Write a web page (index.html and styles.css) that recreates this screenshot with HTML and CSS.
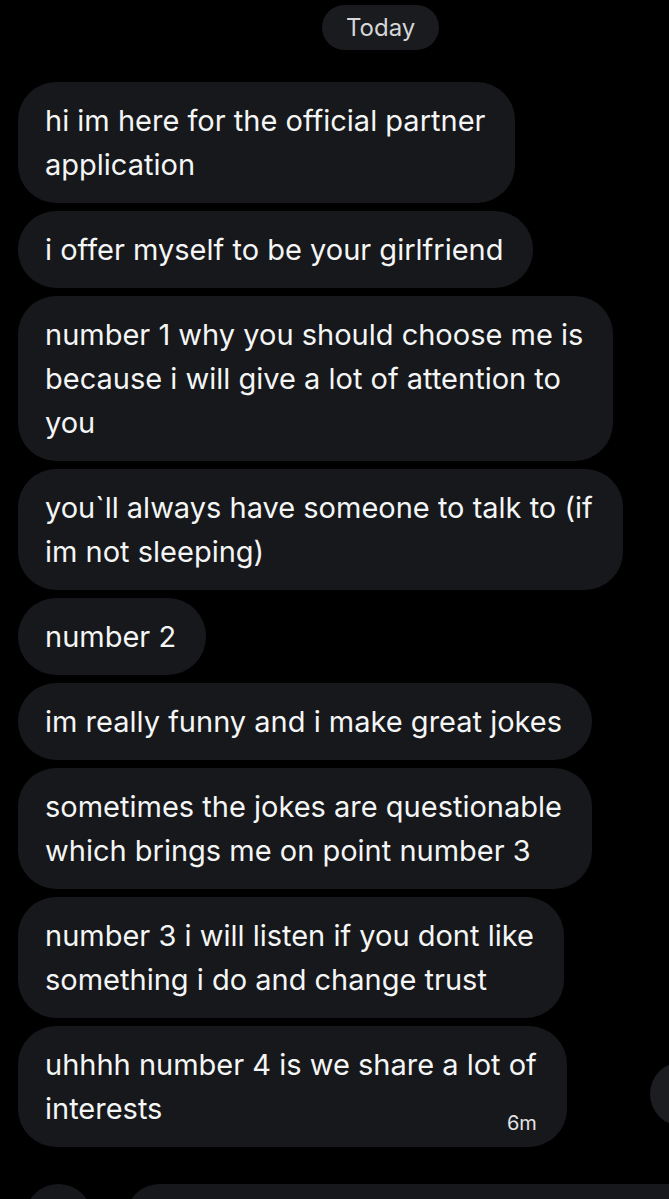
FILE: index.html
```html
<!DOCTYPE html>
<html lang="en">
<head>
  <meta charset="UTF-8">
  <title>Messages</title>
  <link rel="stylesheet" href="styles.css">
</head>
<body>

  <div class="chat">
    <div class="day"><span>Today</span></div>

    <div class="thread">
      <div class="bubble">hi im here for the official partner<br>application</div>
      <div class="bubble">i offer myself to be your girlfriend</div>
      <div class="bubble">number 1 why you should choose me is<br>because i will give a lot of attention to<br>you</div>
      <div class="bubble">you`ll always have someone to talk to (if<br>im not sleeping)</div>
      <div class="bubble">number 2</div>
      <div class="bubble">im really funny and i make great jokes</div>
      <div class="bubble">sometimes the jokes are questionable<br>which brings me on point number 3</div>
      <div class="bubble">number 3 i will listen if you dont like<br>something i do and change trust</div>
      <div class="bubble last">
        uhhhh number 4 is we share a lot of
        <div class="last-line"><span>interests</span><span class="time">6m</span></div>
      </div>
    </div>

    <!-- reaction button peeking in from the right -->
    <div class="react"></div>

    <!-- compose bar, cut off at the bottom -->
    <div class="compose">
      <div class="compose-btn"></div>
      <div class="compose-field"></div>
    </div>
  </div>

</body>
</html>
```

FILE: styles.css
```css
body {
  margin: 0;
  background: #000;
  color: #e7e9ea;
  font-family: "Inter", "Noto Sans", sans-serif;
  overflow: hidden;
}

.chat {
  position: relative;
  height: 1199px;
  overflow: hidden;
}

/* the crop is off-centre, so the pill sits right of the middle */
.day {
  display: flex;
  padding: 5px 0 0 322px;
}

.day span {
  background: #1a1b1e;
  color: #d4d6d7;
  font-size: 24px;
  line-height: 45px;
  padding: 0 24px;
  border-radius: 23px;
}

.thread {
  display: flex;
  flex-direction: column;
  align-items: flex-start;
  gap: 8px;
  padding: 32px 0 0 18px;
}

.bubble {
  background: #17181b;
  color: #f4f5f5;
  font-size: 29px;
  line-height: 44px;
  padding: 16.5px 30px 16.5px 27px;
  border-radius: 38px;
  white-space: nowrap;
}

.last-line {
  display: flex;
  justify-content: space-between;
  align-items: flex-end;
}

.time {
  font-size: 20px;
  line-height: 28px;
  color: #e2e3e4;
  margin-bottom: -6px;
}

.react {
  position: absolute;
  left: 650px;
  top: 1062px;
  width: 64px;
  height: 64px;
  border-radius: 50%;
  background: #1c1d20;
}

.compose {
  position: absolute;
  left: 25px;
  right: 0;
  top: 1184px;
  display: flex;
  gap: 34px;
}

.compose-btn {
  width: 67px;
  height: 67px;
  border-radius: 50%;
  background: #17181b;
}

.compose-field {
  flex: 1;
  height: 67px;
  border-radius: 34px 0 0 34px;
  background: #17181b;
}
```
